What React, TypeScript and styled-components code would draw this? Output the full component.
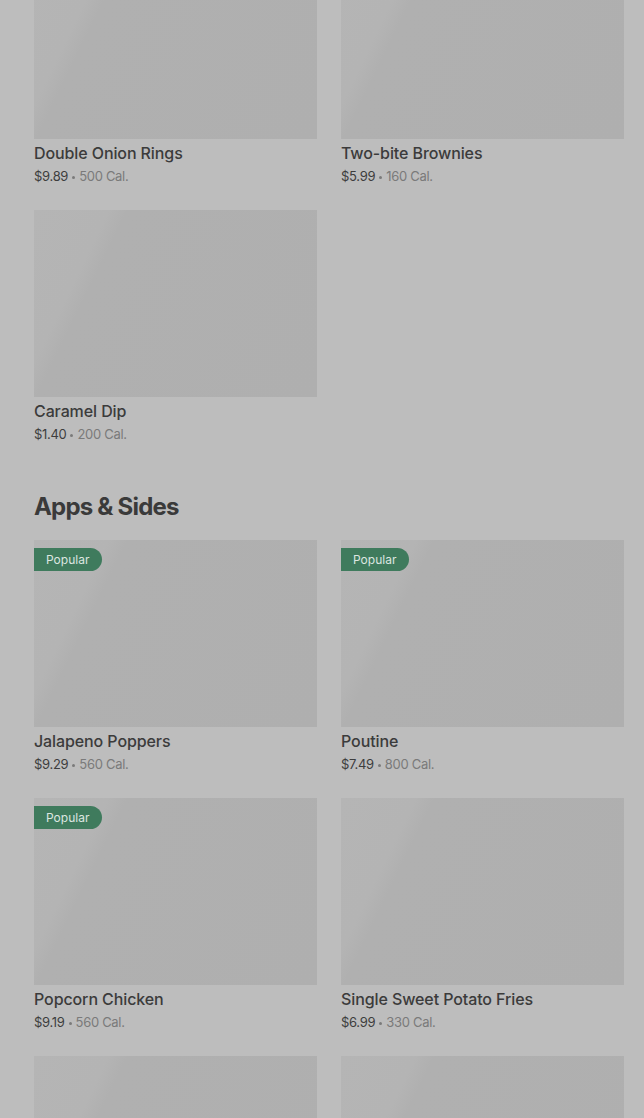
import React from 'react';
import styled, { createGlobalStyle } from 'styled-components';

const GlobalStyle = createGlobalStyle`
  html, body {
    margin: 0;
    padding: 0;
    background: #bdbdbd;
    overflow: hidden;
  }
  body {
    font-family: Inter, Roboto, "Liberation Sans", Arial, sans-serif;
  }
`;

type Item = {
  name: string;
  price: string;
  cal: string;
  popular?: boolean;
};

type Section = {
  title?: string;
  items: Item[];
};

const Page = styled.div`
  height: 1118px;
  overflow: hidden;
`;

// the page is scrolled: the first row's picture is cut by the top edge
const Scroller = styled.main`
  margin-top: -48px;
`;

const SectionBlock = styled.section`
  padding: 0 20px 0 34px;
  & + & {
    margin-top: 48px;
  }
`;

const Heading = styled.h2`
  margin: 0 0 17px;
  font-size: 24px;
  line-height: 32px;
  font-weight: 700;
  letter-spacing: -0.8px;
  color: #3a3a3a;
`;

const Grid = styled.div`
  display: grid;
  grid-template-columns: 283px 283px;
  column-gap: 24px;
  row-gap: 25px;
`;

const Card = styled.div`
  display: flex;
  flex-direction: column;
`;

// skeleton picture with the lighter shimmer band on its left
const Picture = styled.div`
  position: relative;
  height: 187px;
  background: linear-gradient(116deg, #b5b5b5 0%, #b4b4b4 20%, #b0b0b0 25%, #afafaf 100%);
`;

const Badge = styled.span`
  position: absolute;
  top: 8px;
  left: 0;
  height: 23px;
  padding: 0 13px 0 12px;
  display: flex;
  align-items: center;
  background: #3f7b5d;
  border-radius: 0 12px 12px 0;
  color: #dde6e0;
  font-size: 12px;
`;

const Name = styled.div`
  margin-top: 3px;
  font-size: 16px;
  line-height: 22px;
  font-weight: 500;
  letter-spacing: -0.1px;
  color: #3b3b3b;
`;

const Meta = styled.div`
  margin-top: 3px;
  height: 18px;
  font-size: 13px;
  line-height: 18px;
  color: #7a7a7a;
  letter-spacing: -0.3px;
`;

const Price = styled.span`
  color: #3d3d3d;
`;

const Dot = styled.span`
  display: inline-block;
  width: 3px;
  height: 3px;
  margin: 0 4px;
  border-radius: 50%;
  background: #7a7a7a;
  vertical-align: middle;
`;

const sections: Section[] = [
  {
    items: [
      { name: 'Double Onion Rings', price: '$9.89', cal: '500 Cal.' },
      { name: 'Two-bite Brownies', price: '$5.99', cal: '160 Cal.' },
      { name: 'Caramel Dip', price: '$1.40', cal: '200 Cal.' },
    ],
  },
  {
    title: 'Apps & Sides',
    items: [
      { name: 'Jalapeno Poppers', price: '$9.29', cal: '560 Cal.', popular: true },
      { name: 'Poutine', price: '$7.49', cal: '800 Cal.', popular: true },
      { name: 'Popcorn Chicken', price: '$9.19', cal: '560 Cal.', popular: true },
      { name: 'Single Sweet Potato Fries', price: '$6.99', cal: '330 Cal.' },
      { name: 'Cheese Curds', price: '$6.49', cal: '480 Cal.' },
      { name: 'Mozzarella Sticks', price: '$7.29', cal: '620 Cal.' },
    ],
  },
];

const MenuCard: React.FC<{ item: Item }> = ({ item }) => (
  <Card>
    <Picture>{item.popular && <Badge>Popular</Badge>}</Picture>
    <Name>{item.name}</Name>
    <Meta>
      <Price>{item.price}</Price>
      <Dot />
      {item.cal}
    </Meta>
  </Card>
);

const App: React.FC = () => (
  <Page>
    <GlobalStyle />
    <Scroller>
      {sections.map((section, i) => (
        <SectionBlock key={i}>
          {section.title && <Heading>{section.title}</Heading>}
          <Grid>
            {section.items.map((item) => (
              <MenuCard key={item.name} item={item} />
            ))}
          </Grid>
        </SectionBlock>
      ))}
    </Scroller>
  </Page>
);

export default App;
